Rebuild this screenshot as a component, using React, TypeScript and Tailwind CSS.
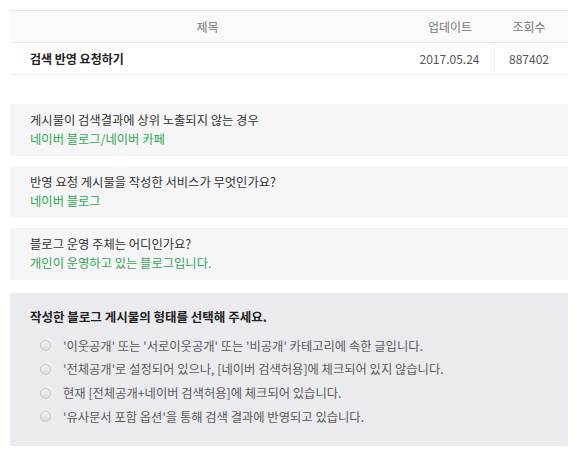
import React from "react";

const font = { fontFamily: '"Noto Sans CJK KR", "Noto Sans", sans-serif' };

function Box({ q, a }: { q: string; a: string }) {
  return (
    <div className="bg-[#f6f6f8] h-[52px] pl-[20px] pt-[7px] flex flex-col">
      <div className="text-[12.3px] leading-[19px] text-[#333]">{q}</div>
      <div className="text-[12.3px] leading-[19px] text-[#2fa84f]">{a}</div>
    </div>
  );
}

const options = [
  "'이웃공개' 또는 '서로이웃공개' 또는 '비공개' 카테고리에 속한 글입니다.",
  "'전체공개'로 설정되어 있으나, [네이버 검색허용]에 체크되어 있지 않습니다.",
  "현재 [전체공개+네이버 검색허용]에 체크되어 있습니다.",
  "'유사문서 포함 옵션'을 통해 검색 결과에 반영되고 있습니다.",
];

export default function App() {
  return (
    <div className="w-[575px] h-[453px] bg-white" style={font}>
      <div className="ml-[10px] w-[558px] pt-[10px]">
        <div className="border-t border-[#e3e3e3]">
          <div className="flex h-[32px] items-center bg-[#fafafa] border-b border-[#e8e8e8] text-[12px] text-[#777]">
            <div className="w-[395px] text-center">제목</div>
            <div className="w-[90px] text-center">업데이트</div>
            <div className="w-[68px] text-center">조회수</div>
          </div>
          <div className="flex h-[32px] items-center border-b border-[#ececec] text-[12px]">
            <div className="w-[395px] pl-[20px] font-bold text-[#222]">검색 반영 요청하기</div>
            <div className="w-[90px] text-center text-[#555] h-full flex items-center justify-center border-r border-[#f0f0f0]">2017.05.24</div>
            <div className="w-[68px] text-center text-[#555]">887402</div>
          </div>
        </div>

        <div className="mt-[29px] flex flex-col gap-[10px]">
          <Box q="게시물이 검색결과에 상위 노출되지 않는 경우" a="네이버 블로그/네이버 카페" />
          <Box q="반영 요청 게시물을 작성한 서비스가 무엇인가요?" a="네이버 블로그" />
          <Box q="블로그 운영 주체는 어디인가요?" a="개인이 운영하고 있는 블로그입니다." />
        </div>

        <div className="mt-[13px] bg-[#ebebef] h-[153px] pl-[20px] pt-[15px]">
          <div className="text-[12.5px] leading-[18px] font-bold text-[#222]">작성한 블로그 게시물의 형태를 선택해 주세요.</div>
          <div className="mt-[8px] flex flex-col">
            {options.map((o) => (
              <label key={o} className="flex items-center h-[23.7px] pl-[10px]">
                <span className="w-[11px] h-[11px] rounded-full border border-[#c4c4c4] bg-gradient-to-b from-[#f4f4f4] to-[#d9d9d9] shrink-0" />
                <span className="ml-[12px] text-[12.3px] text-[#5a5a5a]">{o}</span>
              </label>
            ))}
          </div>
        </div>
      </div>
    </div>
  );
}
